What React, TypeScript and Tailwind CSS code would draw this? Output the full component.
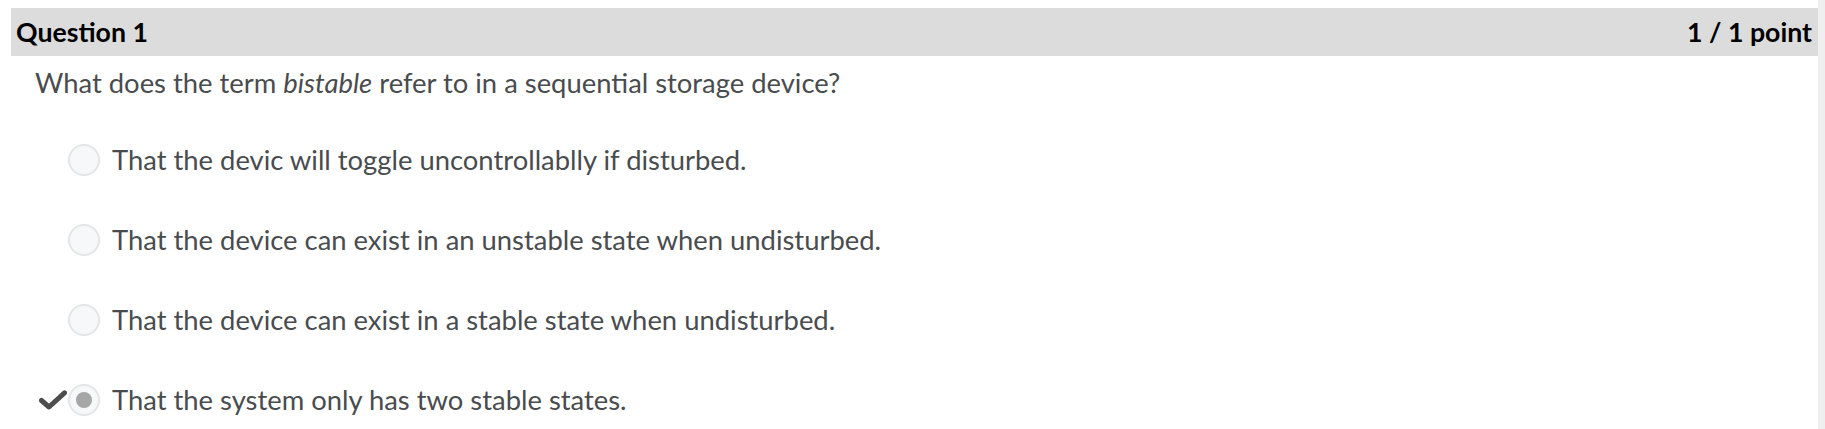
import React from "react";

const options = [
  { text: "That the devic will toggle uncontrollablly if disturbed.", selected: false },
  { text: "That the device can exist in an unstable state when undisturbed.", selected: false },
  { text: "That the device can exist in a stable state when undisturbed.", selected: false },
  { text: "That the system only has two stable states.", selected: true },
];

function Check() {
  return (
    <svg width="28" height="20" viewBox="0 0 28 20" className="block">
      <path d="M2.5 10.5 L10 17 L25.5 2.8" fill="none" stroke="#4c4c4c" strokeWidth="5" strokeLinecap="round" strokeLinejoin="round" />
    </svg>
  );
}

export default function App() {
  return (
    <div className="flex min-h-[429px] bg-white" style={{ fontFamily: "Lato, 'Noto Sans', sans-serif" }}>
      <div className="flex-1 pl-[11px] pt-[8px]">
        <div className="h-[48px] bg-[#dcdcdc] flex items-center justify-between pl-[5px] pr-[6px]">
          <span className="text-[26.7px] font-bold text-[#000000]">Question 1</span>
          <span className="text-[26.7px] font-bold text-[#000000]">1 / 1 point</span>
        </div>
        <p className="pl-[24px] mt-[8px] text-[27.4px] leading-[38px] text-[#494c4e]">
          What does the term <em>bistable</em> refer to in a sequential storage device?
        </p>
        <div className="mt-[18px] pl-[28px]">
          {options.map((o, i) => (
            <div key={i} className="h-[80px] flex items-center">
              <div className="w-[28px] flex items-center justify-center">{o.selected ? <Check /> : null}</div>
              <div className="ml-[1px] w-[32px] h-[32px] rounded-full border-2 border-[#e3e5e9] bg-[#f7f8f9] flex items-center justify-center">
                {o.selected ? <div className="w-[16px] h-[16px] rounded-full bg-[#a6a6a6]" /> : null}
              </div>
              <span className="ml-[12px] text-[27.4px] text-[#494c4e]">{o.text}</span>
            </div>
          ))}
        </div>
      </div>
      <div className="w-[7px] bg-[#efefef]" />
    </div>
  );
}
